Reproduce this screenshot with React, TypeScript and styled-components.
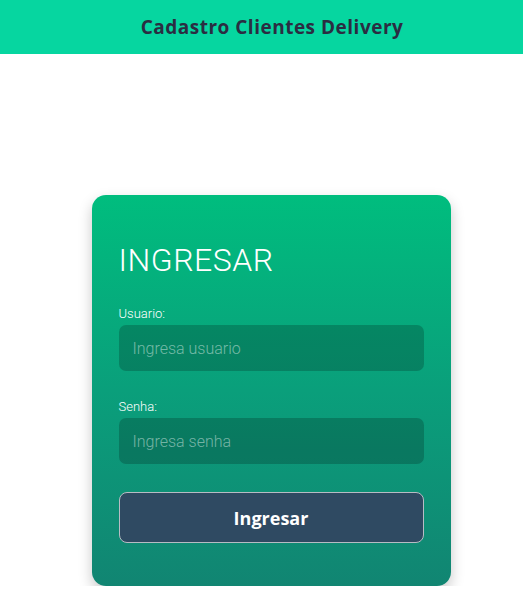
import React from "react";
import styled, { createGlobalStyle } from "styled-components";

const GlobalStyle = createGlobalStyle`
  html, body { margin: 0; padding: 0; background: #ffffff; }
  body { font-family: "Roboto", "Liberation Sans", sans-serif; }
  * { box-sizing: border-box; }
`;

const Header = styled.header`
  height: 54px;
  background: #06d6a0;
  display: flex;
  align-items: center;
  justify-content: center;
  padding-left: 21px;
`;

const HeaderTitle = styled.h1`
  margin: 0;
  font-family: "Open Sans", "Liberation Sans", sans-serif;
  font-weight: 700;
  font-size: 19px;
  letter-spacing: 0.5px;
  color: #2b2d42;
`;

const Main = styled.main`
  display: flex;
  justify-content: center;
  padding: 141px 0 0 19px;
`;

const Card = styled.form`
  width: 359px;
  height: 391px;
  border-radius: 14px;
  background: linear-gradient(180deg, #00bd7e 0%, #0a9f7b 50%, #118572 100%);
  box-shadow: 0 6px 14px rgba(0, 0, 0, 0.22);
  padding: 45px 27px 0 27px;
  display: flex;
  flex-direction: column;
`;

const Title = styled.h2`
  margin: 0 0 26px 0;
  font-family: "Roboto", sans-serif;
  font-weight: 300;
  font-size: 32px;
  line-height: 40px;
  letter-spacing: 0.5px;
  color: #ffffff;
`;

const Field = styled.div<{ $gap: number }>`
  display: flex;
  flex-direction: column;
  margin-bottom: ${(p) => p.$gap}px;
`;

const Label = styled.label`
  font-family: "Roboto", sans-serif;
  font-weight: 300;
  font-size: 13px;
  line-height: 15px;
  color: #ffffff;
  margin-bottom: 4px;
`;

const Input = styled.input`
  height: 46px;
  width: 305px;
  border: none;
  border-radius: 7px;
  background: rgba(0, 0, 0, 0.2);
  padding: 0 14px;
  font-family: "Roboto", sans-serif;
  font-weight: 300;
  font-size: 16px;
  color: #ffffff;
  outline: none;
  &::placeholder {
    color: rgba(255, 255, 255, 0.45);
  }
`;

const Button = styled.button`
  height: 51px;
  width: 305px;
  border-radius: 8px;
  border: 1px solid #b8bcc4;
  background: #2f4a62;
  color: #ffffff;
  font-family: "Open Sans", "Liberation Sans", sans-serif;
  font-weight: 700;
  font-size: 18px;
  cursor: pointer;
`;

export default function App() {
  return (
    <>
      <GlobalStyle />
      <Header>
        <HeaderTitle>Cadastro Clientes Delivery</HeaderTitle>
      </Header>
      <Main>
        <Card onSubmit={(e) => e.preventDefault()}>
          <Title>INGRESAR</Title>
          <Field $gap={28}>
            <Label>Usuario:</Label>
            <Input placeholder="Ingresa usuario" />
          </Field>
          <Field $gap={28}>
            <Label>Senha:</Label>
            <Input type="password" placeholder="Ingresa senha" />
          </Field>
          <Button type="submit">Ingresar</Button>
        </Card>
      </Main>
    </>
  );
}
